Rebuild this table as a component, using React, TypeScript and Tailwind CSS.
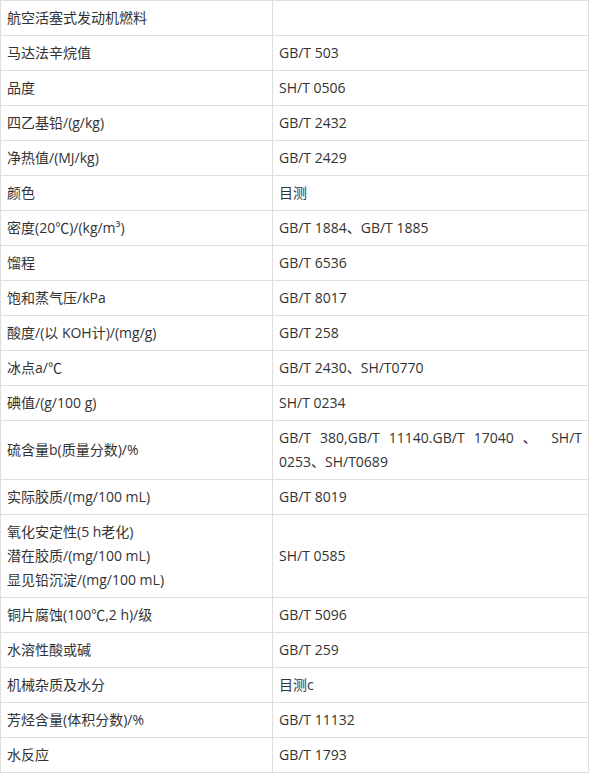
import React from "react";

const rows: [string[], string][] = [
  [["航空活塞式发动机燃料"], ""],
  [["马达法辛烷值"], "GB/T 503"],
  [["品度"], "SH/T 0506"],
  [["四乙基铅/(g/kg)"], "GB/T 2432"],
  [["净热值/(MJ/kg)"], "GB/T 2429"],
  [["颜色"], "目测"],
  [["密度(20℃)/(kg/m³)"], "GB/T 1884、GB/T 1885"],
  [["馏程"], "GB/T 6536"],
  [["饱和蒸气压/kPa"], "GB/T 8017"],
  [["酸度/(以 KOH计)/(mg/g)"], "GB/T 258"],
  [["冰点a/℃"], "GB/T 2430、SH/T0770"],
  [["碘值/(g/100 g)"], "SH/T 0234"],
  [["硫含量b(质量分数)/%"], "GB/T 380,GB/T 11140.GB/T 17040 、 SH/T 0253、SH/T0689"],
  [["实际胶质/(mg/100 mL)"], "GB/T 8019"],
  [["氧化安定性(5 h老化)", "潜在胶质/(mg/100 mL)", "显见铅沉淀/(mg/100 mL)"], "SH/T 0585"],
  [["铜片腐蚀(100℃,2 h)/级"], "GB/T 5096"],
  [["水溶性酸或碱"], "GB/T 259"],
  [["机械杂质及水分"], "目测c"],
  [["芳烃含量(体积分数)/%"], "GB/T 11132"],
  [["水反应"], "GB/T 1793"],
];

export default function App() {
  return (
    <div className="bg-white w-[590px] min-h-[775px] font-['Open_Sans','Noto_Sans_CJK_SC',sans-serif] text-[14px] text-[#333]">
      <table className="w-[589px] table-fixed border-collapse border border-[#dedede]">
        <colgroup>
          <col className="w-[272px]" />
          <col />
        </colgroup>
        <tbody>
          {rows.map(([left, right], i) => (
            <tr key={i}>
              <td className="border border-[#dedede] px-[6px] py-[5px] leading-[24px] align-middle">
                {left.map((l, j) => (
                  <div key={j}>{l}</div>
                ))}
              </td>
              <td className="border border-[#dedede] px-[6px] py-[5px] leading-[24px] align-middle text-justify">
                {right}
              </td>
            </tr>
          ))}
        </tbody>
      </table>
    </div>
  );
}
